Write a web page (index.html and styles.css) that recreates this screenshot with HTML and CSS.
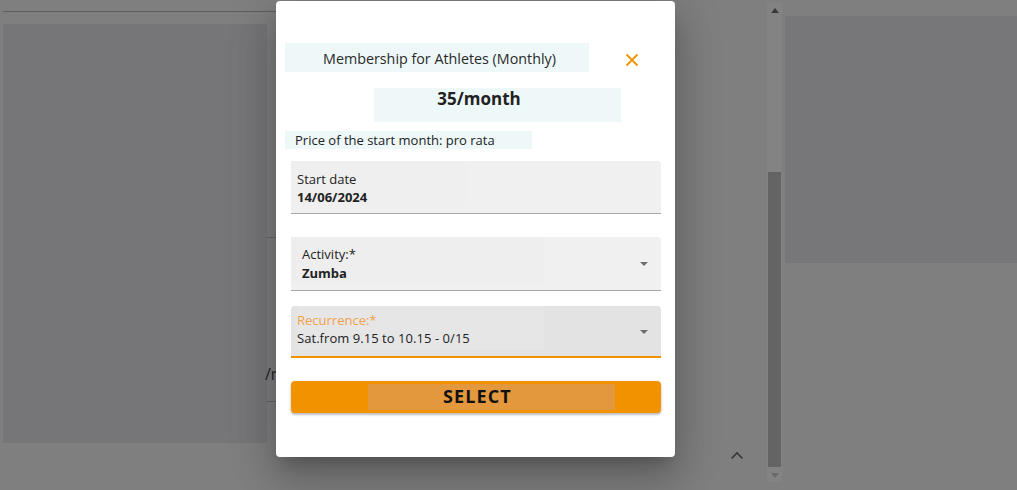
FILE: index.html
```html
<!DOCTYPE html>
<html lang="en">
<head>
<meta charset="utf-8">
<title>Membership</title>
<link rel="stylesheet" href="styles.css">
</head>
<body>
<div class="page">
  <div class="main">
    <div class="content">
      <div class="topline"></div>
      <div class="columns">
        <div class="left-panel"></div>
        <div class="mid-col">
          <div class="mid-block"></div>
          <div class="mid-text">/month</div>
          <div class="mid-line"></div>
        </div>
      </div>
      <button class="to-top" aria-label="Back to top">
        <svg width="14" height="9" viewBox="0 0 14 9"><path d="M1.5 7.5 L7 2 L12.5 7.5" fill="none" stroke="#383838" stroke-width="1.6"/></svg>
      </button>
    </div>
    <div class="scrollbar">
      <div class="sb-arrow"><svg width="8" height="5" viewBox="0 0 8 5"><path d="M0 5 L4 0 L8 5Z" fill="#3a3a3a"/></svg></div>
      <div class="sb-track"><div class="sb-thumb"></div></div>
      <div class="sb-arrow"><svg width="8" height="5" viewBox="0 0 8 5"><path d="M0 0 L4 5 L8 0Z" fill="#6a6a6a"/></svg></div>
    </div>
  </div>
  <div class="side"><div class="side-panel"></div></div>
</div>

<div class="modal">
  <div class="title-row">
    <div class="title">Membership for Athletes (Monthly)</div>
    <button class="close" aria-label="Close">
      <svg width="14" height="14" viewBox="0 0 14 14"><path d="M1.5 1.5 L12.5 12.5 M12.5 1.5 L1.5 12.5" stroke="#f39200" stroke-width="1.8" fill="none"/></svg>
    </button>
  </div>
  <div class="price">35/month</div>
  <div class="prorata">Price of the start month: pro rata</div>

  <div class="field f-date">
    <div class="field-inner">
      <div class="label">Start date</div>
      <div class="value bold">14/06/2024</div>
    </div>
  </div>

  <div class="field f-activity">
    <div class="field-inner">
      <div class="label">Activity:*</div>
      <div class="value bold">Zumba</div>
    </div>
    <span class="caret"></span>
  </div>

  <div class="field f-recur">
    <div class="field-inner">
      <div class="label orange">Recurrence:*</div>
      <div class="value">Sat.from 9.15 to 10.15 - 0/15</div>
    </div>
    <span class="caret"></span>
  </div>

  <button class="select-btn"><span class="select-inner">SELECT</span></button>
</div>
</body>
</html>
```

FILE: styles.css
```css
* { box-sizing: border-box; }

html, body {
  margin: 0;
  padding: 0;
  width: 1017px;
  height: 490px;
  overflow: hidden;
  background: #7f7f7f;
  font-family: "Open Sans", "Noto Sans", sans-serif;
}

.page {
  display: flex;
  height: 490px;
}

.main {
  width: 782px;
  display: flex;
}

.content {
  position: relative;
  flex: 1;
  padding-top: 11px;
  padding-left: 3px;
}

.topline {
  width: 667px;
  height: 1px;
  background: #5f5f5f;
}

.columns {
  display: flex;
  margin-top: 12px;
}

.left-panel {
  width: 264px;
  height: 419px;
  background: #767678;
}

.mid-col {
  width: 403px;
  display: flex;
  flex-direction: column;
}

.mid-block {
  height: 214px;
  border-bottom: 1px solid #666;
}

.mid-text {
  margin-top: 123px;
  height: 26px;
  font-size: 16px;
  line-height: 26px;
  color: #222;
  margin-left: -2px;
}

.mid-line {
  margin-top: 14px;
  height: 1px;
  background: #666;
}

.to-top {
  position: absolute;
  left: 729px;
  top: 450px;
  width: 16px;
  height: 11px;
  padding: 0;
  border: 0;
  background: transparent;
  display: flex;
  align-items: center;
  justify-content: center;
}

.scrollbar {
  width: 15px;
  margin-top: 3px;
  height: 479px;
  background: #838383;
  display: flex;
  flex-direction: column;
  align-items: center;
}

.sb-arrow {
  height: 14px;
  display: flex;
  align-items: center;
  justify-content: center;
}

.sb-track {
  flex: 1;
  width: 100%;
  display: flex;
  flex-direction: column;
  justify-content: flex-end;
  padding: 0 1px;
}

.sb-thumb {
  height: 295px;
  background: #646464;
  margin-bottom: 1px;
}

.side {
  flex: 1;
  padding-left: 3px;
  padding-top: 16px;
}

.side-panel {
  height: 247px;
  background: #777779;
}

/* Modal */
.modal {
  position: absolute;
  left: 276px;
  top: 1px;
  width: 399px;
  height: 456px;
  background: #fff;
  border-radius: 4px;
  padding: 42px 14px 0 9px;
  box-shadow: 0 11px 15px -7px rgba(0,0,0,.2), 0 24px 38px 3px rgba(0,0,0,.14), 0 9px 46px 8px rgba(0,0,0,.12);
  color: #222;
}

.title-row {
  display: flex;
  align-items: center;
}

.title {
  width: 304px;
  height: 29px;
  background: #eef8f9;
  font-size: 14.3px;
  line-height: 31px;
  text-align: center;
  padding-left: 5px;
  color: #2a2a2a;
}

.close {
  margin-left: 31px;
  width: 24px;
  height: 24px;
  padding: 0;
  border: 0;
  background: transparent;
  display: flex;
  align-items: center;
  justify-content: center;
  margin-top: 4px;
}

.price {
  margin-top: 16px;
  margin-left: 89px;
  width: 247px;
  height: 34px;
  background: #eef8f9;
  font-size: 17px;
  font-weight: 700;
  text-align: center;
  line-height: 22px;
  padding-right: 37px;
}

.prorata {
  margin-top: 9px;
  width: 247px;
  height: 18px;
  background: #eef8f9;
  font-size: 13px;
  line-height: 18px;
  padding-left: 10px;
}

.field {
  position: relative;
  margin-left: 6px;
  background: #f0f0f0;
  border-radius: 4px 4px 0 0;
  border-bottom: 1px solid #a8a8a8;
}

.field-inner {
  font-size: 13px;
}

.label, .value {
  line-height: 18px;
  white-space: nowrap;
}

.bold { font-weight: 700; }
.orange { color: #f1a14e; }

.f-date {
  margin-top: 12px;
  height: 53px;
}
.f-date .field-inner {
  width: 176px;
  height: 45px;
  padding: 9px 0 0 6px;
  background: #efefef;
}

.f-activity {
  margin-top: 23px;
  height: 54px;
}
.f-activity .field-inner {
  width: 253px;
  height: 46px;
  padding: 8px 0 0 11px;
  background: #eeeeee;
}
.f-activity .value { margin-top: 1px; }

.f-recur {
  margin-top: 15px;
  height: 52px;
  background: #e3e3e3;
  border-bottom: 2px solid #f39200;
}
.f-recur .field-inner {
  margin-left: 6px;
  width: 247px;
  height: 44px;
  padding: 5px 0 0 0;
  background: #e6e6e6;
}
.f-recur .value { letter-spacing: 0.05px; }

.caret {
  position: absolute;
  right: 13px;
  top: 25px;
  width: 0;
  height: 0;
  border-left: 4px solid transparent;
  border-right: 4px solid transparent;
  border-top: 4px solid #6e6e6e;
}
.f-recur .caret { top: 24px; }

.select-btn {
  display: flex;
  justify-content: flex-start;
  align-items: center;
  margin-top: 23px;
  margin-left: 6px;
  width: 370px;
  height: 32px;
  border: 0;
  border-radius: 4px;
  background: #f39200;
  box-shadow: 0 2px 2px rgba(0,0,0,.2), 0 1px 4px rgba(0,0,0,.1);
  padding: 0 0 0 77px;
  font-family: inherit;
}

.select-inner {
  width: 247px;
  height: 26px;
  background: #e3983e;
  font-size: 18px;
  font-weight: 700;
  letter-spacing: 1.1px;
  line-height: 25px;
  color: #111;
  text-align: left;
  padding-left: 75px;
}
```
